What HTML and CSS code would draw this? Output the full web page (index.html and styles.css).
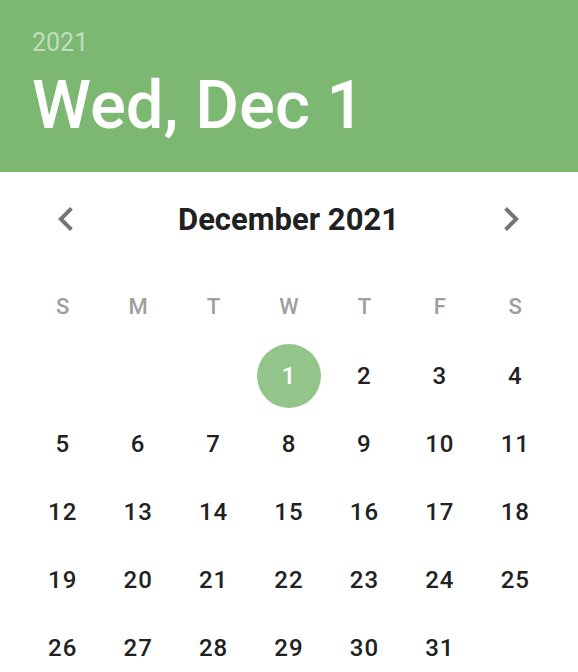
FILE: index.html
```html
<!DOCTYPE html>
<html lang="en">
<head>
<meta charset="utf-8">
<title>Date picker</title>
<link rel="stylesheet" href="styles.css">
</head>
<body>
<div class="picker">
  <header class="toolbar">
    <div class="year">2021</div>
    <div class="date">Wed, Dec 1</div>
  </header>
  <div class="nav">
    <button class="arrow" aria-label="Previous month">
      <svg viewBox="0 0 24 24" width="48" height="48"><path d="M15.41 7.41L14 6l-6 6 6 6 1.41-1.41L10.83 12z"/></svg>
    </button>
    <div class="month">December 2021</div>
    <button class="arrow" aria-label="Next month">
      <svg viewBox="0 0 24 24" width="48" height="48"><path d="M10 6L8.59 7.41 13.17 12l-4.58 4.59L10 18l6-6z"/></svg>
    </button>
  </div>
  <div class="weekdays">
    <span>S</span><span>M</span><span>T</span><span>W</span><span>T</span><span>F</span><span>S</span>
  </div>
  <div class="days">
    <span></span><span></span><span></span>
    <span class="day selected"><b>1</b></span>
    <span class="day"><b>2</b></span><span class="day"><b>3</b></span><span class="day"><b>4</b></span>
    <span class="day"><b>5</b></span><span class="day"><b>6</b></span><span class="day"><b>7</b></span><span class="day"><b>8</b></span><span class="day"><b>9</b></span><span class="day"><b>10</b></span><span class="day"><b>11</b></span>
    <span class="day"><b>12</b></span><span class="day"><b>13</b></span><span class="day"><b>14</b></span><span class="day"><b>15</b></span><span class="day"><b>16</b></span><span class="day"><b>17</b></span><span class="day"><b>18</b></span>
    <span class="day"><b>19</b></span><span class="day"><b>20</b></span><span class="day"><b>21</b></span><span class="day"><b>22</b></span><span class="day"><b>23</b></span><span class="day"><b>24</b></span><span class="day"><b>25</b></span>
    <span class="day"><b>26</b></span><span class="day"><b>27</b></span><span class="day"><b>28</b></span><span class="day"><b>29</b></span><span class="day"><b>30</b></span><span class="day"><b>31</b></span>
  </div>
</div>
</body>
</html>
```
FILE: styles.css
```css
html, body {
  margin: 0;
  padding: 0;
  overflow: hidden;
  background: #ffffff;
}

body {
  font-family: Roboto, "Liberation Sans", sans-serif;
  width: 578px;
  height: 672px;
}

.toolbar {
  box-sizing: border-box;
  height: 172px;
  background: #7cb872;
  padding: 28px 32px 0;
  color: #ffffff;
}

.year {
  font-size: 25px;
  line-height: 29px;
  color: rgba(255, 255, 255, 0.54);
}

.date {
  margin-top: 14px;
  font-size: 67px;
  line-height: 68px;
  font-weight: 500;
}

.nav {
  display: flex;
  align-items: center;
  justify-content: space-between;
  height: 48px;
  margin-top: 23px;
  padding: 0 43px 0 42px;
}

.arrow {
  width: 48px;
  height: 48px;
  padding: 0;
  border: 0;
  background: none;
  display: flex;
  align-items: center;
  justify-content: center;
}

.arrow svg {
  fill: #757575;
  display: block;
}

.month {
  font-size: 31px;
  font-weight: 700;
  color: #212121;
}

.weekdays {
  display: grid;
  grid-template-columns: repeat(7, 1fr);
  padding: 0 25px;
  margin-top: 49px;
  height: 30px;
  line-height: 30px;
  font-size: 22px;
  font-weight: 500;
  color: #9e9e9e;
  text-align: center;
}

.days {
  display: grid;
  grid-template-columns: repeat(7, 1fr);
  grid-auto-rows: 68px;
  padding: 0 25px;
  margin-top: 20px;
}

.day {
  display: flex;
  align-items: center;
  justify-content: center;
}

.day b {
  width: 64px;
  height: 64px;
  border-radius: 50%;
  display: flex;
  align-items: center;
  justify-content: center;
  font-size: 24px;
  font-weight: 500;
  letter-spacing: 1px;
  color: #212121;
}

.day.selected b {
  background: #93c58b;
  color: #ffffff;
  font-weight: 500;
}
```
